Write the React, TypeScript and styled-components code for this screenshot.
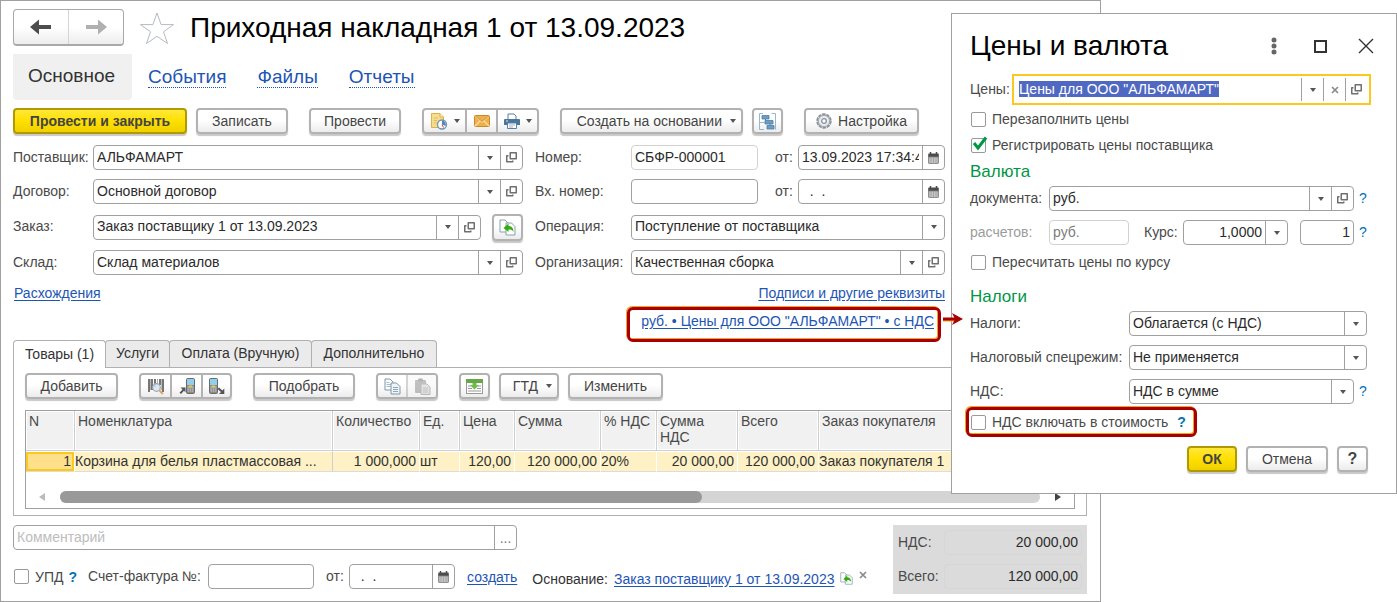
import React, { useEffect, useRef } from 'react';
import styled, { createGlobalStyle, css } from 'styled-components';

const GlobalStyle = createGlobalStyle`
  *, *::before, *::after { box-sizing: border-box; }
  body {
    margin: 0;
    background: #fff;
    color: #4a4a4a;
    font: 14px/16px "Liberation Sans", Arial, sans-serif;
  }
  button, input, select { font: inherit; color: inherit; margin: 0; }
`;

const line = '#a0a0a0';

/* ---------- frame ---------- */

const Page = styled.div`
  position: relative;
`;

const Window = styled.main`
  margin-right: 296px;
  padding: 8px 13px 7px 12px;
  border: 1px solid ${line};
`;

const TitleRow = styled.header`
  display: flex;
  align-items: center;
  height: 37px;
`;

const History = styled.div`
  display: flex;
  width: 111px;
  height: 37px;
  margin-right: 15px;
  border: 1px solid #a8a8a8;
  border-bottom: 2px solid #a8a8a8;
  border-radius: 4px;
  background: linear-gradient(#fff 50%, #ededed);
`;

const HistoryButton = styled.button`
  flex: 1;
  display: flex;
  align-items: center;
  justify-content: center;
  padding: 0;
  border: 0;
  background: none;
  & + & { border-left: 1px solid #d5d5d5; }
`;

const StarButton = styled.button`
  display: flex;
  padding: 0;
  border: 0;
  background: none;
  margin-right: 15px;
`;

const Title = styled.h1`
  margin: 0;
  color: #000;
  font-size: 28px;
  font-weight: 400;
  line-height: 32px;
`;

const Sections = styled.nav`
  display: flex;
  align-items: center;
  gap: 31px;
  height: 46px;
  margin-top: 8px;
  font-size: 19px;
  line-height: 24px;
`;

const CurrentSection = styled.span`
  width: 119px;
  height: 46px;
  padding: 10px 15px;
  margin-right: -15px;
  border-radius: 0 0 4px 4px;
  background: #f0f0f0;
  color: #333;
`;

const SectionLink = styled.a`
  height: 22px;
  line-height: 21px;
  border-bottom: 1px dotted #1d55b5;
  color: #1d55b5;
  text-decoration: none;
`;

const Link = styled.a`
  color: #1d55b5;
  text-decoration: underline;
  text-underline-offset: 2px;
`;

/* ---------- buttons ---------- */

const Toolbar = styled.div`
  display: flex;
  gap: 21px;
  height: 26px;
`;

const MainToolbar = styled(Toolbar)`
  margin-top: 8px;
`;

const Cluster = styled.div`
  display: flex;
  gap: 9px;
`;

const raised = css`
  border: 2px solid #b2b2b2;
  border-radius: 4px;
  background: linear-gradient(#fff 45%, #ececec);
  box-shadow: 0 2px 1px #c8c8c8;
`;

const Button = styled.button<{ $w: number; $primary?: boolean }>`
  ${raised}
  display: flex;
  align-items: center;
  justify-content: center;
  gap: 6px;
  flex: none;
  width: ${(p) => p.$w}px;
  height: 26px;
  padding: 0;
  color: #444;
  white-space: nowrap;
  ${(p) =>
    p.$primary &&
    css`
      border-color: #b09a00;
      background: linear-gradient(#ffe83a, #ffe000 50%, #efd000);
      font-weight: 700;
      color: #444;
    `}
`;

const MenuButton = styled(Button)`
  justify-content: flex-end;
  gap: 8px;
  padding-right: 5px;
`;

const HelpButton = styled(Button)`
  font-size: 16px;
  font-weight: 700;
`;

const ButtonGroup = styled.div`
  ${raised}
  display: flex;
  height: 26px;
`;

const GroupButton = styled.button<{ $w: number }>`
  display: flex;
  align-items: center;
  justify-content: center;
  gap: 6px;
  width: ${(p) => p.$w}px;
  padding: 0;
  border: 0;
  background: none;
  & + & { border-left: 2px solid #b2b2b2; }
  &:disabled { opacity: 0.55; background: #f6f6f6; }
`;

/* ---------- fields ---------- */

const Field = styled.div<{ $w?: number; $muted?: boolean }>`
  display: flex;
  flex: ${(p) => (p.$w ? 'none' : '1')};
  width: ${(p) => (p.$w ? `${p.$w}px` : 'auto')};
  min-width: 0;
  height: 25px;
  border: 1px solid ${(p) => (p.$muted ? '#d2d2d2' : line)};
  border-radius: 4px;
  background: #fff;
  overflow: hidden;
`;

const control = css`
  flex: 1;
  width: 0;
  min-width: 0;
  height: 23px;
  padding: 0 3px 2px;
  border: 0;
  outline: 0;
  background: none;
  color: #2b2b2b;
`;

const TextInput = styled.input<{ $right?: boolean }>`
  ${control}
  text-align: ${(p) => (p.$right ? 'right' : 'left')};
  &::placeholder { color: #bdbdbd; opacity: 1; }
  &:disabled { color: #7d7d7d; }
`;

const Select = styled.select`
  ${control}
  appearance: none;
`;

const cell = css`
  display: flex;
  align-items: center;
  justify-content: center;
  flex: none;
  width: 22px;
  padding: 0;
  border: 0;
  border-left: 1px solid ${line};
  background: none;
`;

const CellButton = styled.button`
  ${cell}
  color: #777;
`;

const CellMark = styled.span`
  ${cell}
  pointer-events: none;
`;

const Form = styled.div`
  display: flex;
  gap: 12px;
  margin: 11px 142px 0 0;
`;

const FormColumn = styled.div<{ $fixed?: boolean }>`
  display: flex;
  flex-direction: column;
  gap: 9px;
  ${(p) => (p.$fixed ? 'flex: none; width: 410px;' : 'flex: 1; min-width: 0;')}
`;

const FormRow = styled.div<{ $tall?: boolean }>`
  display: flex;
  align-items: center;
  height: ${(p) => (p.$tall ? 28 : 25)}px;
`;

const Label = styled.label<{ $w?: number; $muted?: boolean }>`
  flex: none;
  width: ${(p) => (p.$w ? `${p.$w}px` : 'auto')};
  padding-bottom: 2px;
  color: ${(p) => (p.$muted ? '#9c9c9c' : '#4a4a4a')};
  white-space: nowrap;
`;

const FromLabel = styled(Label)<{ $narrow?: boolean }>`
  width: ${(p) => (p.$narrow ? 35 : 40)}px;
  padding-left: ${(p) => (p.$narrow ? 12 : 17)}px;
`;

const FillButton = styled(Button)`
  height: 27px;
  margin-left: 11px;
`;

const LinkRow = styled.div`
  display: flex;
  justify-content: space-between;
  align-items: center;
  height: 20px;
  margin: 8px 142px 0 1px;
`;

const callout = css`
  border: 3px solid #a80000;
  border-radius: 6px;
  box-shadow: -1px -1px 0 #f3a31c, inset -1px -1px 0 #f3a31c;
`;

const PriceCallout = styled.div`
  ${callout}
  position: relative;
  width: 314px;
  height: 35px;
  margin: 4px 146px -2px auto;
  padding: 3px 4px 0 0;
  text-align: right;
  white-space: nowrap;
`;

const CalloutArrow = styled.svg`
  position: absolute;
  z-index: 3;
  left: calc(100% + 5px);
  top: 2px;
`;

/* ---------- tabs and table ---------- */

const TabList = styled.div`
  display: flex;
  height: 28px;
  position: relative;
`;

const Tab = styled.button<{ $w: number; $active?: boolean }>`
  width: ${(p) => p.$w}px;
  height: ${(p) => (p.$active ? 28 : 27)}px;
  padding: 0 0 2px;
  border: 1px solid #b0b0b0;
  border-bottom: 0;
  border-radius: 4px 4px 0 0;
  margin-right: -1px;
  background: ${(p) => (p.$active ? '#fff' : '#ebebeb')};
  color: #333;
  white-space: nowrap;
`;

const Panel = styled.section`
  margin-top: -1px;
  padding: 5px 11px 6px;
  border: 1px solid #b0b0b0;
`;

const TableFrame = styled.div`
  margin-top: 11px;
  border: 1px solid ${line};
`;

const Table = styled.table`
  width: 100%;
  table-layout: fixed;
  border-collapse: separate;
  border-spacing: 0;
`;

const Th = styled.th`
  height: 40px;
  padding: 2px 3px;
  border-right: 1px solid #cfcfcf;
  border-bottom: 1px solid #cfcfcf;
  background: #f1f1f1;
  box-shadow: inset 0 0 0 1px #fff;
  font-weight: 400;
  text-align: left;
  vertical-align: top;
`;

const Td = styled.td<{ $right?: boolean; $divided?: boolean; $active?: boolean }>`
  height: 21px;
  padding: 0 ${(p) => (p.$right ? 3 : 0)}px 2px 0;
  border-top: 1px solid #fff;
  border-bottom: 1px solid #dcdcdc;
  border-right: 1px solid ${(p) => (p.$divided ? '#cfcfcf' : '#fff')};
  background: ${(p) => (p.$active ? '#ffe08a' : '#fdf1c5')};
  background-clip: padding-box;
  box-shadow: ${(p) => (p.$active ? 'inset 0 0 0 2px #fbc81e' : 'none')};
  color: #333;
  text-align: ${(p) => (p.$right ? 'right' : 'left')};
  white-space: nowrap;
`;

const ScrollBar = styled.div`
  display: flex;
  align-items: center;
  gap: 15px;
  height: 36px;
  padding: 13px 13px 0;
`;

const Track = styled.div`
  flex: 1;
  height: 12px;
  border-radius: 6px;
  background: #d4d4d4;
`;

const Thumb = styled.div`
  width: calc(100% * 655 / 1000);
  height: 12px;
  border-radius: 6px;
  background: #999;
`;

/* ---------- footer ---------- */

const Footer = styled.footer`
  display: flex;
  justify-content: space-between;
  margin-top: 9px;
`;

const CommentRow = styled.div`
  display: flex;
  width: 504px;
`;

const CommentMore = styled(CellButton)`
  align-items: flex-end;
  padding-bottom: 3px;
`;

const InvoiceRow = styled.div`
  display: flex;
  align-items: center;
  height: 25px;
  margin-top: 14px;
  white-space: nowrap;
`;

const Basis = styled.div`
  display: flex;
  align-items: center;
  gap: 6px;
  margin-left: 15px;
  padding-top: 4px;
  color: #333;
`;

const CreateLink = styled(Link)`
  margin-left: 12px;
`;

const PlainIconButton = styled.button`
  display: flex;
  align-self: flex-start;
  padding: 0;
  border: 0;
  background: none;
  color: #8a8a8a;
`;

const Totals = styled.div`
  flex: none;
  display: flex;
  flex-direction: column;
  gap: 9px;
  width: 194px;
  height: 69px;
  padding: 5px;
  background: #dbdbdb;
`;

const TotalField = styled(Field)`
  border-color: #d6d6d6;
  background: none;
`;

/* ---------- check boxes ---------- */

const CheckLabel = styled.label`
  display: flex;
  align-items: center;
  gap: 6px;
  height: 26px;
  padding-left: 1px;
  white-space: nowrap;
`;

const CheckBox = styled.span`
  position: relative;
  display: flex;
  width: 15px;
  height: 15px;
`;

const CheckInput = styled.input`
  appearance: none;
  width: 15px;
  height: 15px;
  border: 1px solid #999;
  border-radius: 2px;
  background: #fff;
  & + svg { display: none; }
  &:checked + svg { display: block; }
`;

const Tick = styled.svg`
  position: absolute;
  left: 1px;
  top: -2px;
  pointer-events: none;
`;

const Hint = styled.button`
  flex: none;
  padding: 0;
  border: 0;
  background: none;
  color: #0072b8;
`;

const BoldHint = styled(Hint)`
  font-weight: 700;
`;

const InvoiceHint = styled(BoldHint)`
  margin: 0 11px 0 5px;
`;

/* ---------- dialog ---------- */

const Dialog = styled.section`
  position: absolute;
  z-index: 2;
  top: 13px;
  right: 0;
  width: 446px;
  height: 481px;
  padding: 0 29px 0 18px;
  border: 1px solid ${line};
  background: #fff;
`;

const DialogHeader = styled.header`
  display: flex;
  align-items: center;
  justify-content: space-between;
  height: 60px;
  padding-top: 4px;
`;

const WindowControls = styled.div`
  display: flex;
  gap: 30px;
  margin-right: -7px;
`;

const WindowControl = styled.button`
  display: flex;
  padding: 0;
  border: 0;
  background: none;
  color: #333;
`;

const PriceRow = styled.div`
  display: flex;
  align-items: center;
  height: 31px;
  margin: 0 -4px 1px 0;
`;

const FocusField = styled.div`
  flex: 1;
  display: flex;
  height: 31px;
  padding: 2px 2px 2px 0;
  border: 2px solid #fbc81e;
`;

const FocusInput = styled(TextInput)`
  padding: 0 5px 2px;
  &::selection { background: #4f69c2; color: #fff; }
`;

const DialogRow = styled.div`
  display: flex;
  align-items: center;
  height: 25px;
  & + & { margin-top: 9px; }
`;

const RowHint = styled(Hint)`
  width: 13px;
  padding: 0 0 2px 5px;
`;

const GroupTitle = styled.h2`
  margin: 0;
  color: #009646;
  font-size: 17px;
  font-weight: 400;
  line-height: 28px;
`;

const RateLabel = styled(Label)`
  width: 54px;
  padding-left: 15px;
`;

const CoefField = styled(Field)`
  margin-left: 12px;
`;

const Recalc = styled.div`
  margin: 4px 0 8px;
`;

const VatCallout = styled.div`
  ${callout}
  display: flex;
  align-items: center;
  gap: 9px;
  width: 231px;
  height: 30px;
  margin: 3px 0 0 -4px;
  padding-left: 1px;
`;

const DialogActions = styled.div`
  display: flex;
  justify-content: flex-end;
  gap: 9px;
  margin: 9px -1px 0 0;
`;

/* ---------- icons ---------- */

const Arrow = ({ flip, color }: { flip?: boolean; color: string }) => (
  <svg width="22" height="16" viewBox="0 0 22 16">
    <path d={flip ? 'M22 8 13 .5V6H1v4h12v5.5z' : 'M0 8 9 .5V6h12v4H9v5.5z'} fill={color} />
  </svg>
);

const Star = () => (
  <svg width="36" height="34" viewBox="0 0 36 34">
    <path d="M18 2l4.1 11.6H34.5l-10 7.2 4 11.7L18 25.300 7.500 32.500l4-11.700-10-7.200h12.400z" fill="#fff" stroke="#b5bac0" />
  </svg>
);

const Caret = () => (
  <svg width="6" height="4" viewBox="0 0 6 4"><path d="M0 0h6L3 4z" fill="#555" /></svg>
);

const OpenIcon = () => (
  <svg width="11" height="11" viewBox="0 0 11 11" fill="none" stroke="#6f6f6f" strokeWidth="1.500" strokeLinejoin="round">
    <path d="M4.250 .750h6v6h-6z" />
    <path d="M2.500 3.750H.750v6h6V8.500" />
  </svg>
);

const CalendarIcon = () => (
  <svg width="11" height="12" viewBox="0 0 11 12">
    <path d="M1 1.500h9a.8.8 0 0 1 .8.8V5H.2V2.300a.8.8 0 0 1 .8-.8z" fill="#4c4c4c" />
    <path d="M2.500 0v3M8.500 0v3" stroke="#4c4c4c" strokeWidth="1.500" />
    <path d="M.7 5h9.600v6.300H.7z" fill="#ddd" stroke="#777" />
    <path d="M3 5v6M5.500 5v6M8 5v6M1 7h9M1 9h9" stroke="#999" strokeWidth=".7" />
  </svg>
);

const CrossIcon = () => (
  <svg width="8" height="8" viewBox="0 0 8 8"><path d="M1 1l6 6M7 1L1 7" stroke="#8a8a8a" strokeWidth="1.700" /></svg>
);

const ReportIcon = () => (
  <svg width="18" height="18" viewBox="0 0 18 18">
    <path d="M1.500 1.500h8.500l3.500 3.500v10.500h-12z" fill="#f5dd8c" stroke="#dcb04e" />
    <path d="M10 1.500V5h3.500" fill="#fff2bd" stroke="#dcb04e" />
    <path d="M4 6h4M4 8.500h3M4 11h3" stroke="#e0bd62" />
    <circle cx="12" cy="12.500" r="4.500" fill="#fff" stroke="#6e93b5" strokeWidth="1.300" />
    <path d="M12 12.500V8.600a4 4 0 0 1 3.500 5.500z" fill="#4f86bd" />
    <path d="M12 12.500l1.500 3" stroke="#d04a3c" />
  </svg>
);

const MailIcon = () => (
  <svg width="16" height="12" viewBox="0 0 16 12">
    <rect x=".5" y=".5" width="15" height="11" rx="1" fill="#efb04c" stroke="#c98a2b" />
    <path d="M1 1l7 6 7-6M1 11l5-5M15 11l-5-5" fill="none" stroke="#fbe0a4" strokeWidth="1.200" />
    <path d="M1 .8l7 5.500 7-5.500" fill="none" stroke="#b5761c" strokeWidth=".7" />
  </svg>
);

const PrintIcon = () => (
  <svg width="16" height="16" viewBox="0 0 16 16">
    <path d="M4 1h6l2 2v4H4z" fill="#fff" stroke="#5d7f9e" />
    <path d="M1 6h14a1 1 0 0 1 1 1v5H0V7a1 1 0 0 1 1-1z" fill="#4a759c" />
    <path d="M2 8h2" stroke="#cfe0ee" />
    <path d="M3.500 10h9v5.500h-9z" fill="#fff" stroke="#5d7f9e" />
    <path d="M5 12h6M5 14h4" stroke="#9db4c8" />
  </svg>
);

const StructureIcon = () => (
  <svg width="17" height="17" viewBox="0 0 17 17">
    <path d="M4 .5H.5V16.500H5M12.500.5h4V16.500M.5 9.500h5" fill="none" stroke="#9ab6cc" />
    <path d="M3 2.500h7v3.500H3zM6 7.500h8V11H6zM8 12.500h7V16H8z" fill="#6f9cc0" stroke="#4f7fa6" strokeWidth=".8" />
    <path d="M6.500 6v1.500M11 11v1.500" stroke="#4f7fa6" />
  </svg>
);

const GearIcon = () => (
  <svg width="16" height="16" viewBox="0 0 16 16">
    <circle cx="8" cy="8" r="6.700" fill="none" stroke="#8b929c" strokeWidth="2" strokeDasharray="3.500 .710" />
    <circle cx="8" cy="8" r="5.600" fill="#e8eaed" stroke="#a3a9b1" />
    <circle cx="8" cy="8" r="2.300" fill="#fff" stroke="#8b929c" strokeWidth="1.300" />
  </svg>
);

const FillIcon = ({ size = 17 }: { size?: number }) => (
  <svg width={size} height={size} viewBox="0 0 17 17">
    <path d="M1 1h5l3 3v9H1z" fill="#fff" stroke="#8a9fae" />
    <path d="M7 4h5.500l3.500 3.500V16H7z" fill="#fff" stroke="#8a9fae" />
    <path d="M4.500 9l5-4.500v2.500c3 0 5 2 5 6-1-2-2.500-2.500-5-2.500V13z" fill="#35ab12" />
  </svg>
);

const BarcodeIcon = () => (
  <svg width="18" height="17" viewBox="0 0 18 17">
    <path d="M2 1v13M5 1v11M8 1v8M13 1v6M16 1v13" stroke="#4a4a4a" strokeWidth="1.500" />
    <path d="M3.600 1v11M10.500 1v6M14.700 1v11" stroke="#888" strokeWidth=".7" />
    <circle cx="9.500" cy="9.500" r="3.800" fill="#d5e6f2" fillOpacity=".85" stroke="#9aa7b2" strokeWidth="1.200" />
    <path d="M12.300 12.300l3.500 3.700" stroke="#e0a56c" strokeWidth="2.200" />
  </svg>
);

const Terminal = ({ x }: { x: number }) => (
  <g transform={`translate(${x} 0)`}>
    <rect x=".5" y=".5" width="8" height="15" rx="1" fill="#8a8a8a" stroke="#6a6a6a" />
    <rect x="1" y="1" width="7" height="6" fill="#8fd0ee" />
    <path d="M1.500 9h6M1.500 11h6M1.500 13h6" stroke="#cfcfcf" strokeDasharray="1.500 .7" />
    <rect x="3" y="7.500" width="3" height="2" fill="#f6c63a" />
  </g>
);

const TerminalInIcon = () => (
  <svg width="18" height="17" viewBox="0 0 18 17">
    <Terminal x={8} />
    <path d="M1.500 14.800l3-3.300L2.500 9.500h5v5l-1.500-1.700-3 3.200z" fill="#555" />
  </svg>
);

const TerminalOutIcon = () => (
  <svg width="18" height="17" viewBox="0 0 18 17">
    <Terminal x={1} />
    <path d="M11 9.500l3.300 3 2-2v5.500h-5.300l2-2-3.500-3z" fill="#555" />
  </svg>
);

const CopyIcon = () => (
  <svg width="17" height="17" viewBox="0 0 17 17">
    <path d="M1 1h5l3 3v8H1z" fill="#fff" stroke="#8096a8" />
    <path d="M2.500 4.500h3M2.500 6.500h5M2.500 8.500h5" stroke="#a8bac8" />
    <path d="M7 5h5.500l3.500 3.500V16H7z" fill="#eef4f8" stroke="#8096a8" />
    <path d="M9 9.500h5M9 11.500h5M9 13.500h5" stroke="#8fa6b8" />
  </svg>
);

const PasteIcon = () => (
  <svg width="17" height="17" viewBox="0 0 17 17">
    <rect x="1" y="2" width="11" height="13" rx="1" fill="#8f8f8f" />
    <rect x="4" y=".5" width="5" height="3" rx="1" fill="#777" />
    <path d="M7 6h6l3 3v7.500H7z" fill="#d0d0d0" stroke="#8a8a8a" />
    <path d="M9 10h5M9 12h5M9 14h5" stroke="#999" />
  </svg>
);

const SheetIcon = () => (
  <svg width="17" height="15" viewBox="0 0 17 15">
    <rect x=".5" y=".5" width="16" height="14" fill="#fff" stroke="#999" />
    <rect x="0" y="0" width="17" height="4" fill="#67a846" />
    <path d="M2 7h3M12 7h3M2 9.500h4M11 9.500h4M2 12h13" stroke="#999" />
    <path d="M6.500 4h4v2h2.500l-4.500 4.500-4.500-4.500h2.500z" fill="#6fbd4c" />
  </svg>
);

/* ---------- field helpers ---------- */

const DropButton = () => <CellButton aria-label="Выбрать"><Caret /></CellButton>;
const OpenButton = () => <CellButton aria-label="Открыть"><OpenIcon /></CellButton>;
const DateButton = () => <CellButton aria-label="Календарь"><CalendarIcon /></CellButton>;

const Combo = ({ id, value, open }: { id: string; value: string; open?: boolean }) => (
  <Field>
    <TextInput id={id} defaultValue={value} />
    <DropButton />
    {open && <OpenButton />}
  </Field>
);

const Choice = ({ id, value }: { id: string; value: string }) => (
  <Field>
    <Select id={id} defaultValue={value}><option>{value}</option></Select>
    <CellMark><Caret /></CellMark>
  </Field>
);

const Check = ({ children, checked }: { children: React.ReactNode; checked?: boolean }) => (
  <CheckLabel>
    <CheckBox>
      <CheckInput type="checkbox" defaultChecked={checked} />
      <Tick width="16" height="15" viewBox="0 0 16 15">
        <path d="M2 7l4 5 8-10.500" fill="none" stroke="#009646" strokeWidth="3" />
      </Tick>
    </CheckBox>
    {children}
  </CheckLabel>
);

/* ---------- screen parts ---------- */

const columns: { name: string; width?: number; value: string; right?: boolean }[] = [
  { name: 'N', width: 49, value: '1', right: true },
  { name: 'Номенклатура', value: 'Корзина для белья пластмассовая ...' },
  { name: 'Количество', width: 87, value: '1 000,000', right: true },
  { name: 'Ед.', width: 40, value: 'шт' },
  { name: 'Цена', width: 55, value: '120,00', right: true },
  { name: 'Сумма', width: 86, value: '120 000,00', right: true },
  { name: '% НДС', width: 56, value: '20%' },
  { name: 'Сумма НДС', width: 81, value: '20 000,00', right: true },
  { name: 'Всего', width: 81, value: '120 000,00', right: true },
  { name: 'Заказ покупателя', width: 255, value: 'Заказ покупателя 1' },
];

const Goods = () => (
  <TableFrame>
    <Table>
      <colgroup>
        {columns.map((c) => <col key={c.name} width={c.width} />)}
      </colgroup>
      <thead>
        <tr>{columns.map((c) => <Th key={c.name} scope="col">{c.name}</Th>)}</tr>
      </thead>
      <tbody>
        <tr>
          {columns.map((c, i) => (
            <Td key={c.name} $right={c.right} $divided={i === 1} $active={i === 0}>{c.value}</Td>
          ))}
        </tr>
      </tbody>
    </Table>
    <ScrollBar>
      <svg width="6" height="8" viewBox="0 0 6 8"><path d="M6 0v8L0 4z" fill="#bbb" /></svg>
      <Track><Thumb /></Track>
      <svg width="6" height="8" viewBox="0 0 6 8"><path d="M0 0v8l6-4z" fill="#444" /></svg>
    </ScrollBar>
  </TableFrame>
);

const DocumentForm = () => (
  <Form>
    <FormColumn>
      <FormRow><Label $w={80} htmlFor="supplier">Поставщик:</Label><Combo id="supplier" value="АЛЬФАМАРТ" open /></FormRow>
      <FormRow><Label $w={80} htmlFor="contract">Договор:</Label><Combo id="contract" value="Основной договор" open /></FormRow>
      <FormRow $tall>
        <Label $w={80} htmlFor="order">Заказ:</Label>
        <Combo id="order" value="Заказ поставщику 1 от 13.09.2023" open />
        <FillButton $w={31} aria-label="Заполнить по заказу"><FillIcon /></FillButton>
      </FormRow>
      <FormRow><Label $w={80} htmlFor="store">Склад:</Label><Combo id="store" value="Склад материалов" open /></FormRow>
    </FormColumn>
    <FormColumn $fixed>
      <FormRow>
        <Label $w={96} htmlFor="number">Номер:</Label>
        <Field $muted><TextInput id="number" defaultValue="СБФР-000001" /></Field>
        <FromLabel htmlFor="date">от:</FromLabel>
        <Field $w={147}><TextInput id="date" defaultValue="13.09.2023 17:34:45" /><DateButton /></Field>
      </FormRow>
      <FormRow>
        <Label $w={96} htmlFor="in-number">Вх. номер:</Label>
        <Field><TextInput id="in-number" /></Field>
        <FromLabel htmlFor="in-date">от:</FromLabel>
        <Field $w={147}><TextInput id="in-date" defaultValue="  .  ." /><DateButton /></Field>
      </FormRow>
      <FormRow $tall><Label $w={96} htmlFor="operation">Операция:</Label><Choice id="operation" value="Поступление от поставщика" /></FormRow>
      <FormRow><Label $w={96} htmlFor="company">Организация:</Label><Combo id="company" value="Качественная сборка" open /></FormRow>
    </FormColumn>
  </Form>
);

const PricesDialog = () => {
  const prices = useRef<HTMLInputElement>(null);
  useEffect(() => {
    prices.current?.focus();
    prices.current?.select();
  }, []);

  return (
    <Dialog role="dialog" aria-labelledby="dialog-title">
      <DialogHeader>
        <Title as="h2" id="dialog-title">Цены и валюта</Title>
        <WindowControls>
          <WindowControl aria-label="Ещё">
            <svg width="16" height="18" viewBox="0 0 16 18" fill="#666"><circle cx="8" cy="3" r="2.500" /><circle cx="8" cy="9" r="2.500" /><circle cx="8" cy="15" r="2.500" /></svg>
          </WindowControl>
          <WindowControl aria-label="Развернуть">
            <svg width="16" height="18" viewBox="0 0 16 18"><rect x="3" y="4" width="11" height="11" fill="none" stroke="#333" strokeWidth="2" /></svg>
          </WindowControl>
          <WindowControl aria-label="Закрыть">
            <svg width="16" height="18" viewBox="0 0 16 18"><path d="M1 2l14 14M15 2L1 16" stroke="#333" strokeWidth="1.400" /></svg>
          </WindowControl>
        </WindowControls>
      </DialogHeader>

      <PriceRow>
        <Label $w={42} htmlFor="prices">Цены:</Label>
        <FocusField>
          <FocusInput id="prices" ref={prices} defaultValue={'Цены для ООО "АЛЬФАМАРТ"'} />
          <DropButton />
          <CellButton aria-label="Очистить"><CrossIcon /></CellButton>
          <OpenButton />
        </FocusField>
      </PriceRow>
      <Check>Перезаполнить цены</Check>
      <Check checked>Регистрировать цены поставщика</Check>

      <GroupTitle>Валюта</GroupTitle>
      <DialogRow>
        <Label $w={79} htmlFor="currency">документа:</Label>
        <Combo id="currency" value="руб." open />
        <RowHint>?</RowHint>
      </DialogRow>
      <DialogRow>
        <Label $w={79} $muted htmlFor="settlement">расчетов:</Label>
        <Field $w={80} $muted><TextInput id="settlement" defaultValue="руб." disabled /></Field>
        <RateLabel htmlFor="rate">Курс:</RateLabel>
        <Field><TextInput id="rate" $right defaultValue="1,0000" /><DropButton /></Field>
        <CoefField $w={54}><TextInput aria-label="Кратность" $right defaultValue="1" /></CoefField>
        <RowHint>?</RowHint>
      </DialogRow>
      <Recalc><Check>Пересчитать цены по курсу</Check></Recalc>

      <GroupTitle>Налоги</GroupTitle>
      <DialogRow><Label $w={159} htmlFor="taxes">Налоги:</Label><Choice id="taxes" value="Облагается (с НДС)" /></DialogRow>
      <DialogRow><Label $w={159} htmlFor="regime">Налоговый спецрежим:</Label><Choice id="regime" value="Не применяется" /></DialogRow>
      <DialogRow>
        <Label $w={159} htmlFor="vat">НДС:</Label>
        <Choice id="vat" value="НДС в сумме" />
        <RowHint>?</RowHint>
      </DialogRow>
      <VatCallout>
        <Check>НДС включать в стоимость</Check>
        <BoldHint>?</BoldHint>
      </VatCallout>

      <DialogActions>
        <Button $w={50} $primary>ОК</Button>
        <Button $w={82}>Отмена</Button>
        <HelpButton $w={31}>?</HelpButton>
      </DialogActions>
    </Dialog>
  );
};

export default function App() {
  return (
    <Page>
      <GlobalStyle />
      <Window>
        <TitleRow>
          <History>
            <HistoryButton aria-label="Назад"><Arrow color="#4d4d4d" /></HistoryButton>
            <HistoryButton aria-label="Вперед"><Arrow flip color="#b0b0b0" /></HistoryButton>
          </History>
          <StarButton aria-label="В избранное"><Star /></StarButton>
          <Title>Приходная накладная 1 от 13.09.2023</Title>
        </TitleRow>

        <Sections>
          <CurrentSection>Основное</CurrentSection>
          <SectionLink href="#events">События</SectionLink>
          <SectionLink href="#files">Файлы</SectionLink>
          <SectionLink href="#reports">Отчеты</SectionLink>
        </Sections>

        <MainToolbar>
          <Cluster>
            <Button $w={174} $primary>Провести и закрыть</Button>
            <Button $w={92}>Записать</Button>
          </Cluster>
          <Button $w={92}>Провести</Button>
          <ButtonGroup>
            <GroupButton $w={41} aria-label="Отчеты"><ReportIcon /><Caret /></GroupButton>
            <GroupButton $w={31} aria-label="Отправить"><MailIcon /></GroupButton>
            <GroupButton $w={41} aria-label="Печать"><PrintIcon /><Caret /></GroupButton>
          </ButtonGroup>
          <Cluster>
            <MenuButton $w={183}>Создать на основании<Caret /></MenuButton>
            <Button $w={31} aria-label="Структура подчиненности"><StructureIcon /></Button>
          </Cluster>
          <Button $w={115}><GearIcon />Настройка</Button>
        </MainToolbar>

        <DocumentForm />

        <LinkRow>
          <Link href="#differences">Расхождения</Link>
          <Link href="#signatures">Подписи и другие реквизиты</Link>
        </LinkRow>
        <PriceCallout>
          <Link href="#prices">руб. • Цены для ООО "АЛЬФАМАРТ" • с НДС</Link>
          <CalloutArrow width="20" height="14" viewBox="0 0 20 14">
            <path d="M0 8h14" stroke="#f3a31c" strokeWidth="3" />
            <path d="M0 7h14" stroke="#a80000" strokeWidth="3" />
            <path d="M9 1l11 6-11 6 3-6z" fill="#a80000" />
          </CalloutArrow>
        </PriceCallout>

        <TabList role="tablist">
          <Tab role="tab" aria-selected $w={93} $active>Товары (1)</Tab>
          <Tab role="tab" $w={65}>Услуги</Tab>
          <Tab role="tab" $w={143}>Оплата (Вручную)</Tab>
          <Tab role="tab" $w={126}>Дополнительно</Tab>
        </TabList>
        <Panel>
          <Toolbar>
            <Button $w={93}>Добавить</Button>
            <ButtonGroup>
              <GroupButton $w={29} aria-label="Поиск по штрихкоду"><BarcodeIcon /></GroupButton>
              <GroupButton $w={31} aria-label="Загрузить из терминала"><TerminalInIcon /></GroupButton>
              <GroupButton $w={29} aria-label="Выгрузить в терминал"><TerminalOutIcon /></GroupButton>
            </ButtonGroup>
            <Button $w={102}>Подобрать</Button>
            <ButtonGroup>
              <GroupButton $w={28} aria-label="Копировать"><CopyIcon /></GroupButton>
              <GroupButton $w={30} aria-label="Вставить" disabled><PasteIcon /></GroupButton>
            </ButtonGroup>
            <Cluster>
              <Button $w={31} aria-label="Таблица"><SheetIcon /></Button>
              <MenuButton $w={60}>ГТД<Caret /></MenuButton>
              <Button $w={95}>Изменить</Button>
            </Cluster>
          </Toolbar>
          <Goods />
        </Panel>

        <Footer>
          <div>
            <CommentRow>
              <Field>
                <TextInput aria-label="Комментарий" placeholder="Комментарий" />
                <CommentMore aria-label="Открыть комментарий">...</CommentMore>
              </Field>
            </CommentRow>
            <InvoiceRow>
              <Check>УПД</Check>
              <InvoiceHint>?</InvoiceHint>
              <Label $w={120} htmlFor="invoice">Счет-фактура №:</Label>
              <Field $w={106}><TextInput id="invoice" /></Field>
              <FromLabel $narrow htmlFor="invoice-date">от:</FromLabel>
              <Field $w={106}><TextInput id="invoice-date" defaultValue="  .  ." /><DateButton /></Field>
              <CreateLink href="#create">создать</CreateLink>
              <Basis>
                Основание: <Link href="#order">Заказ поставщику 1 от 13.09.2023</Link>
                <FillIcon size={13} />
                <PlainIconButton aria-label="Очистить основание"><CrossIcon /></PlainIconButton>
              </Basis>
            </InvoiceRow>
          </div>
          <Totals>
            <FormRow><Label $w={46} htmlFor="total-vat">НДС:</Label><TotalField><TextInput id="total-vat" $right readOnly value="20 000,00" /></TotalField></FormRow>
            <FormRow><Label $w={46} htmlFor="total">Всего:</Label><TotalField><TextInput id="total" $right readOnly value="120 000,00" /></TotalField></FormRow>
          </Totals>
        </Footer>
      </Window>
      <PricesDialog />
    </Page>
  );
}
